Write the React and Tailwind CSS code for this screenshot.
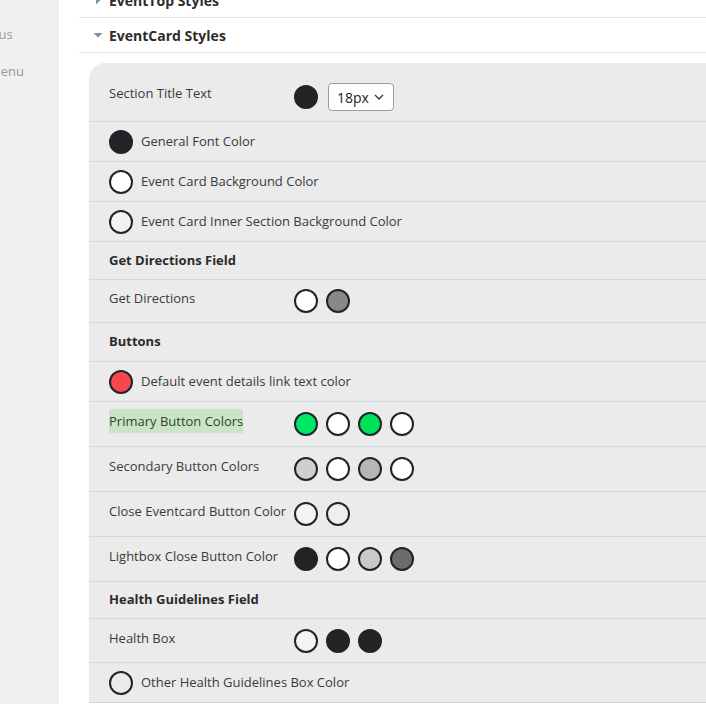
import React from 'react';

// Colour swatch: round 24px dot with a dark ring
function Swatch({ color }) {
    return (
        <span
            className="block w-6 h-6 rounded-full border-2 border-[#222326] shrink-0"
            style={{ backgroundColor: color }}
        />
    );
}

// Row with a label column followed by swatches
function SwatchRow({ label, colors, highlight, h = 'h-[45px]' }) {
    return (
        <div className={`flex items-center gap-2 px-5 border-b border-[#d7d7d7] ${h}`}>
            <div className="min-w-[177px] -mt-[4px]">
                <span className={highlight ? 'bg-[#c9e6c4] py-[3px]' : ''}>{label}</span>
            </div>
            <div className="flex gap-2">
                {colors.map((c, i) => (
                    <Swatch key={i} color={c} />
                ))}
            </div>
        </div>
    );
}

// Row where the swatch sits before the label
function LeadRow({ label, color }) {
    return (
        <div className="flex items-center gap-2 px-5 h-10 border-b border-[#d7d7d7]">
            <Swatch color={color} />
            <span>{label}</span>
        </div>
    );
}

function GroupTitle({ children, h }) {
    return (
        <div className={`flex items-center px-5 font-bold text-[#2c2c2c] border-b border-[#d7d7d7] ${h}`}>
            {children}
        </div>
    );
}

function Caret({ open }) {
    return (
        <svg width="10" height="10" viewBox="0 0 10 10" className="shrink-0">
            {open
                ? <path d="M0.5 3h9L5 7.5z" fill="#8c8c8c" />
                : <path d="M3 0.5v9L7.5 5z" fill="#8c8c8c" />}
        </svg>
    );
}

export default function App() {
    return (
        <div className="flex h-screen overflow-hidden font-['Open_Sans',sans-serif] text-[13px] text-[#3a3a3a] bg-white">
            {/* Side menu, cut off at the left */}
            <div className="w-[59px] shrink-0 bg-[#f0f0f0] overflow-hidden text-[#9a9a9a] text-[13px]">
                <div className="mt-[25px] ml-[-25px] whitespace-nowrap">Status</div>
                <div className="mt-[17px] ml-[-11px] whitespace-nowrap">Menu</div>
            </div>

            <div className="flex-1 pl-5 -mt-[17px]">
                {/* Collapsible section headers */}
                <div className="flex items-center gap-[6px] h-[35px] pl-[14px] border-b border-[#e2e2e2] font-bold text-[14px] text-[#2c2c2c]">
                    <Caret />
                    EventTop Styles
                </div>
                <div className="flex items-center gap-[6px] h-[35px] pl-[14px] border-b border-[#e2e2e2] font-bold text-[14px] text-[#2c2c2c]">
                    <Caret open />
                    EventCard Styles
                </div>

                {/* Style options panel */}
                <div className="ml-[10px] mt-[10px] bg-[#ebebeb] rounded-tl-[16px]">
                    <div className="flex items-center gap-2 px-5 h-[59px] pt-[10px] border-b border-[#d7d7d7]">
                        <div className="min-w-[177px] -mt-[6px]">Section Title Text</div>
                        <Swatch color="#222326" />
                        <div className="flex items-center justify-between w-[66px] h-[28px] ml-[2px] pl-2 pr-[9px] bg-white border border-[#9c9c9c] rounded-[4px] text-[14px] text-[#222]">
                            18px
                            <svg width="10" height="6" viewBox="0 0 10 6" fill="none">
                                <path d="M1 1l4 4 4-4" stroke="#333" strokeWidth="1.3" />
                            </svg>
                        </div>
                    </div>
                    <LeadRow label="General Font Color" color="#222326" />
                    <LeadRow label="Event Card Background Color" color="#ffffff" />
                    <LeadRow label="Event Card Inner Section Background Color" color="#f2f2f2" />
                    <GroupTitle h="h-[38px]">Get Directions Field</GroupTitle>
                    <SwatchRow label="Get Directions" colors={['#ffffff', '#888888']} h="h-[43px]" />
                    <GroupTitle h="h-[39px]">Buttons</GroupTitle>
                    <LeadRow label="Default event details link text color" color="#f6474c" />
                    <SwatchRow label="Primary Button Colors" colors={['#00e765', '#ffffff', '#00e05a', '#ffffff']} highlight />
                    <SwatchRow label="Secondary Button Colors" colors={['#cfcfcf', '#ffffff', '#b6b6b6', '#ffffff']} />
                    <SwatchRow label="Close Eventcard Button Color" colors={['#f4f4f4', '#efefef']} />
                    <SwatchRow label="Lightbox Close Button Color" colors={['#222326', '#ffffff', '#c9c9c9', '#6b6b6b']} />
                    <GroupTitle h="h-[37px]">Health Guidelines Field</GroupTitle>
                    <SwatchRow label="Health Box" colors={['#f4f4f4', '#222326', '#222326']} h="h-[44px]" />
                    <LeadRow label="Other Health Guidelines Box Color" color="#ebebeb" />
                </div>
            </div>
        </div>
    );
}
